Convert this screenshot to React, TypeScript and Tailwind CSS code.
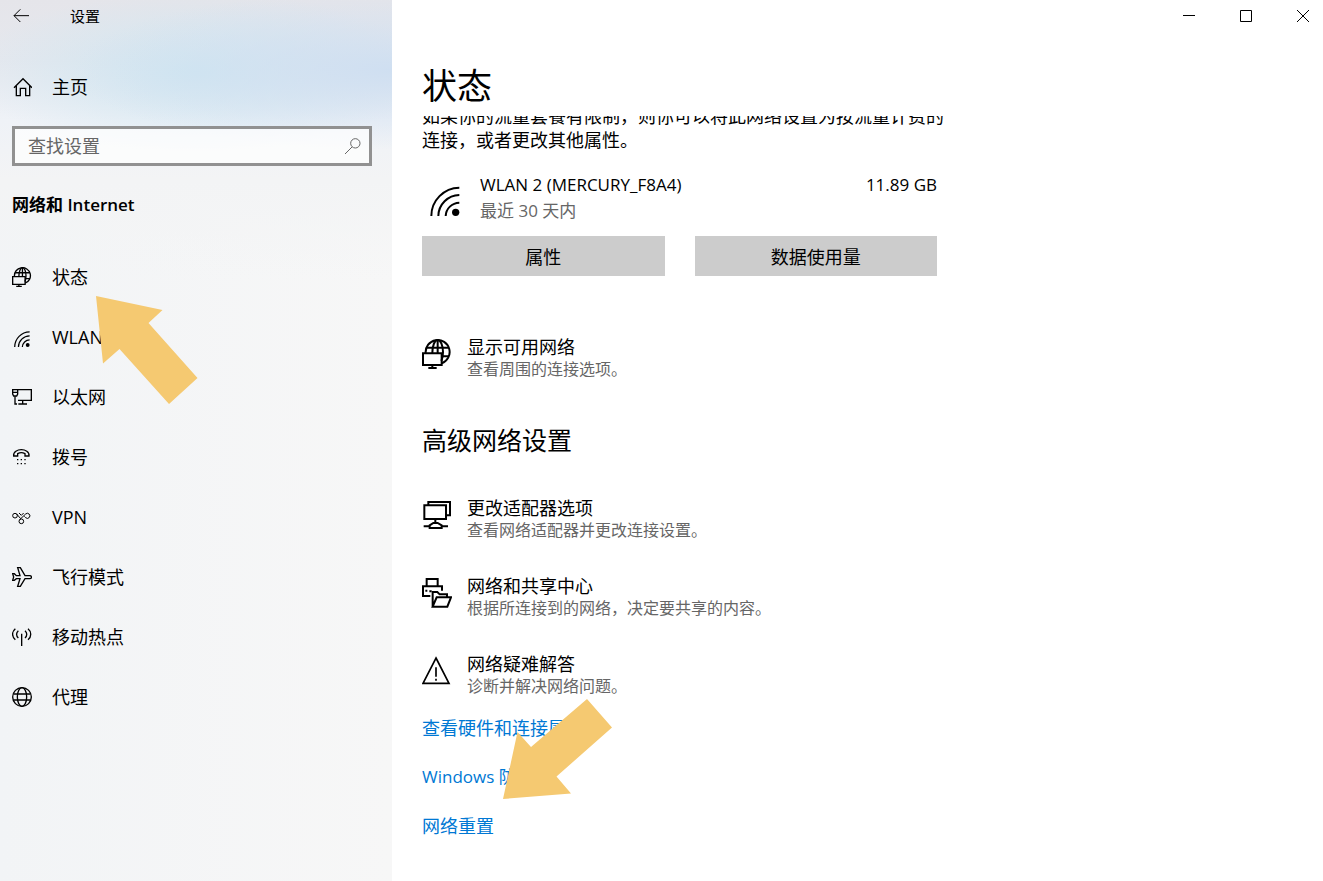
import type { ReactNode } from "react";

type IconProps = { className: string; box: string; width: number; children: ReactNode };

function Icon({ className, box, width, children }: IconProps) {
  return (
    <svg
      aria-hidden="true"
      viewBox={box}
      className={className}
      fill="none"
      stroke="currentColor"
      strokeWidth={width}
    >
      {children}
    </svg>
  );
}

function GlobeMonitor({ className, width }: { className: string; width: number }) {
  return (
    <Icon className={className} box="0 0 90 90" width={width}>
      <path d="M11 42A36 36 0 1 1 59 73" />
      <path d="M31 42C31 20 38 3 47 3S63 20 63 39C63 50 61 60 58 66" />
      <path d="M14 26H80M59 52H81M47 3V42" />
      <path d="M3 43H59V78H3ZM31 78V88M19 87H44" />
    </Icon>
  );
}

function Wifi({ className, width }: { className: string; width: number }) {
  return (
    <Icon className={className} box="0 0 90 90" width={width}>
      <path d="M4 90A85 85 0 0 1 88 5M25 90A64 64 0 0 1 88 27M47 90A42 42 0 0 1 88 50" />
      <circle cx="77" cy="79" r="11" fill="currentColor" stroke="none" />
    </Icon>
  );
}

const navItems: { label: string; icon: ReactNode }[] = [
  { label: "状态", icon: <GlobeMonitor className="size-5" width={6} /> },
  { label: "WLAN", icon: <Wifi className="mt-1 ml-0.5 size-4" width={7} /> },
  {
    label: "以太网",
    icon: (
      <Icon className="size-5" box="0 0 60 60" width={4}>
        <path d="M18 8H58V40H18M32 40V50M19 51H45M9 28V51H15" />
        <path d="M2 8H17V21L14 27H5L2 21ZM2 16H17" />
      </Icon>
    ),
  },
  {
    label: "拨号",
    icon: (
      <Icon className="size-5" box="0 0 60 60" width={4}>
        <path d="M5 27C3 14 17 8 28 8S53 14 51 27H39V20C32 16 24 16 17 20V27Z" />
        <path d="M15 38H19M26 38H30M37 38H41M15 50H19M26 50H30M37 50H41" />
      </Icon>
    ),
  },
  {
    label: "VPN",
    icon: (
      <Icon className="size-5" box="0 0 60 60" width={3}>
        <circle cx="9" cy="26" r="7" />
        <circle cx="28" cy="43" r="7" />
        <path d="M14 21L26 35M23 38L41 21A7.500 7.500 0 1 1 41 32L37 28M21 18L28 25L35 18" />
      </Icon>
    ),
  },
  {
    label: "飞行模式",
    icon: (
      <Icon className="size-5" box="0 0 60 60" width={4}>
        <path d="M2 20H7L13 26H24L17 2H25L39 26H53C60 26 60 35 53 35H39L25 58H17L24 35H13L7 40H2L5 30Z" />
      </Icon>
    ),
  },
  {
    label: "移动热点",
    icon: (
      <Icon className="size-5" box="0 0 60 60" width={4}>
        <path d="M29 20V57M10 5C-1 14 -1 29 10 38M48 5C59 14 59 29 48 38M19 11C12 17 12 27 19 33M39 11C46 17 46 27 39 33" />
      </Icon>
    ),
  },
  {
    label: "代理",
    icon: (
      <Icon className="size-5" box="0 0 60 60" width={4}>
        <circle cx="30" cy="30" r="28" />
        <ellipse cx="30" cy="30" rx="14" ry="28" />
        <path d="M4 21H56M4 39H56" />
      </Icon>
    ),
  },
];

const advanced: { title: string; detail: string; icon: ReactNode }[] = [
  {
    title: "更改适配器选项",
    detail: "查看网络适配器并更改连接设置。",
    icon: (
      <Icon className="size-[30px]" box="0 0 90 90" width={6}>
        <path d="M19 15V6H84V46H74M7 16H72V57H7ZM40 57V68M5 79H78" />
        <path d="M23 84V76L34 69H47L59 76V84Z" fill="white" />
      </Icon>
    ),
  },
  {
    title: "网络和共享中心",
    detail: "根据所连接到的网络，决定要共享的内容。",
    icon: (
      <Icon className="size-[30px]" box="0 0 90 90" width={6}>
        <path d="M14 25V3H47V25M25 54H3V25H60V38M10 38H16M22 40H29" />
        <path d="M32 86V42H46L53 49H75V58M32 86L44 58H87L76 86Z" />
      </Icon>
    ),
  },
  {
    title: "网络疑难解答",
    detail: "诊断并解决网络问题。",
    icon: (
      <Icon className="size-[30px]" box="0 0 90 90" width={5}>
        <path d="M42 6L81 82H3ZM42 34V62M42 68V74" />
      </Icon>
    ),
  },
];

function Option({ title, detail, icon }: { title: string; detail: string; icon: ReactNode }) {
  return (
    <button type="button" className="flex items-start gap-[15px] text-left">
      <span className="pt-1">{icon}</span>
      <span className="flex flex-col">
        <span className="text-[18px] leading-6">{title}</span>
        <span className="text-[16px] leading-5 text-[#666]">{detail}</span>
      </span>
    </button>
  );
}

export default function App() {
  return (
    <div className="flex min-h-screen bg-white font-['Open_Sans','Noto_Sans_CJK_SC',sans-serif] text-[18px] text-black">
      <aside className="w-[392px] shrink-0 bg-[radial-gradient(ellipse_320px_80px_at_100%_70px,#cfdff1,#cfdff180_50%,#cfdff100),radial-gradient(ellipse_230px_80px_at_50%_72px,#cfe6f1,#cfe6f180_50%,#cfe6f100),linear-gradient(to_bottom,#e5e5ea_0,#e6e8ee_60px,#eff2f7_120px,#f3f4f5_180px,#f3f4f500_280px),linear-gradient(to_right,#f2f4f6,#f7f7f7)]">
        <header className="flex h-8 items-center gap-10 px-3">
          <button type="button" aria-label="返回">
            <Icon className="size-[18px]" box="0 0 54 54" width={3}>
              <path d="M6 26H51M25 7L6 26L25 45" />
            </Icon>
          </button>
          <h1 className="text-[15px]">设置</h1>
        </header>

        <a href="#home" className="mt-[25px] flex h-[60px] items-center gap-5 px-3">
          <Icon className="size-5" box="0 0 60 60" width={4}>
            <path d="M6 32L33 5L60 32M13 27V56H25V34H41V56H53V27" />
          </Icon>
          主页
        </a>

        <label className="mx-3 mt-[9px] mr-5 flex h-10 items-center border-3 border-[#919191] bg-white/70 pr-[7px] pl-[13px]">
          <input
            type="search"
            aria-label="查找设置"
            placeholder="查找设置"
            className="min-w-0 flex-1 bg-transparent outline-none placeholder:text-[#666]"
          />
          <Icon className="size-[18px] text-[#666]" box="0 0 54 54" width={3}>
            <circle cx="34" cy="19" r="14" />
            <path d="M24 30L3 51" />
          </Icon>
        </label>

        <h2 className="mt-6 px-3 text-[17px] leading-[30px] font-semibold">网络和 Internet</h2>

        <nav className="relative mt-[27px]">
          {navItems.map(({ label, icon }) => (
            <a key={label} href={`#${label}`} className="flex h-[60px] items-center gap-5 px-3">
              <span className="w-5">{icon}</span>
              {label}
            </a>
          ))}
          <svg
            aria-hidden="true"
            viewBox="0 0 102 108"
            className="pointer-events-none absolute top-[49px] left-24 w-[102px]"
            fill="#f5c971"
          >
            <path d="M0 0L66.5 14L52.5 27L101.5 82L73 108L23.5 53L7 67.5Z" />
          </svg>
        </nav>
      </aside>

      <div className="flex min-w-0 flex-1 flex-col">
        <div className="flex h-8 items-center justify-end">
          <button type="button" aria-label="最小化" className="px-[22px]">
            <Icon className="size-3" box="0 0 12 12" width={1}>
              <path d="M0 5.5H12" />
            </Icon>
          </button>
          <button type="button" aria-label="最大化" className="px-[23px]">
            <Icon className="size-3" box="0 0 12 12" width={1}>
              <path d="M0.5 0.5H11.5V11.5H0.5Z" />
            </Icon>
          </button>
          <button type="button" aria-label="关闭" className="pr-[14px] pl-[22px]">
            <Icon className="size-3" box="0 0 12 12" width={1}>
              <path d="M0 0L12 12M12 0L0 12" />
            </Icon>
          </button>
        </div>

        <main className="px-[30px]">
          <h2 className="pt-7 pb-1 text-[35px] leading-[52px]">状态</h2>

          <div className="overflow-hidden">
            <div className="max-w-[526px]">
              <p className="-mt-3 leading-6">
                如果你的流量套餐有限制，则你可以将此网络设置为按流量计费的连接，或者更改其他属性。
              </p>
            </div>

            <div className="max-w-[515px]">
              <div className="mt-5 flex pl-2">
                <Wifi className="mt-3.5 size-[30px]" width={6} />
                <div className="ml-5 flex-1 text-[17px]">
                  <div className="flex justify-between leading-[26px]">
                    <span>WLAN 2 (MERCURY_F8A4)</span>
                    <span>11.89 GB</span>
                  </div>
                  <div className="leading-[26px] text-[#666]">最近 30 天内</div>
                </div>
              </div>

              <div className="mt-3 grid grid-cols-2 gap-[30px]">
                <button type="button" className="h-10 bg-[#ccc] pt-0.5">
                  属性
                </button>
                <button type="button" className="h-10 bg-[#ccc] pt-0.5">
                  数据使用量
                </button>
              </div>
            </div>

            <div className="mt-[59px] flex">
              <Option
                title="显示可用网络"
                detail="查看周围的连接选项。"
                icon={<GlobeMonitor className="size-[30px]" width={6} />}
              />
            </div>

            <h3 className="mt-[43px] text-[25px] leading-9">高级网络设置</h3>

            <div className="mt-[38px] flex flex-col items-start gap-[34px]">
              {advanced.map((item) => (
                <Option key={item.title} {...item} />
              ))}
            </div>

            <div className="relative mt-5 flex flex-col items-start gap-[25px] pb-[30px] leading-6 text-[#0078d4]">
              <a href="#hardware">查看硬件和连接属性</a>
              <a href="#firewall" className="text-[17px] leading-6">
                Windows 防火墙
              </a>
              <a href="#reset">网络重置</a>
              <svg
                aria-hidden="true"
                viewBox="0 0 109 100"
                className="pointer-events-none absolute -top-[17px] left-[81px] w-[109px]"
                fill="#f5c971"
              >
                <path d="M84 0L109 28.5L53.5 77.5L68 94.5L0 100L14.5 33L28 48Z" />
              </svg>
            </div>
          </div>
        </main>
      </div>
    </div>
  );
}
